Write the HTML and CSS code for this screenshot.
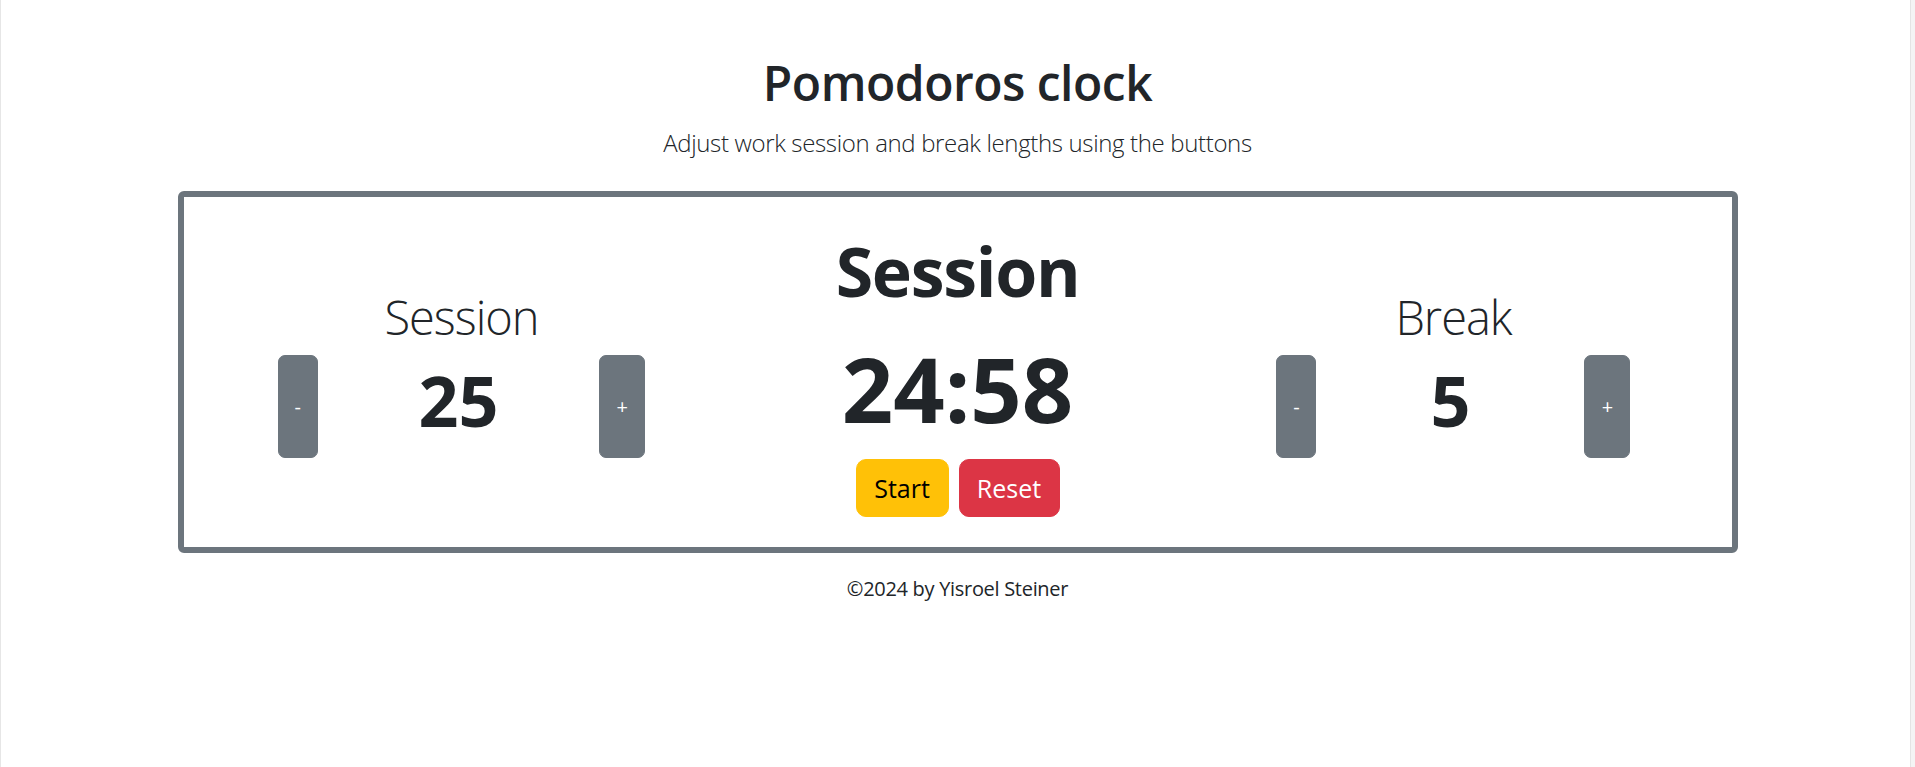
FILE: index.html
```html
<!DOCTYPE html>
<html lang="en">
<head>
<meta charset="utf-8">
<title>Pomodoros clock</title>
<link rel="stylesheet" href="styles.css">
</head>
<body>
<main class="app">
  <header class="intro">
    <h1 class="title">Pomodoros clock</h1>
    <p class="lead">Adjust work session and break lengths using the buttons</p>
  </header>
  <section class="clock">
    <div class="length">
      <h2 class="length-label">Session</h2>
      <div class="length-row">
        <button class="btn btn-step btn-dec">-</button>
        <span class="length-value">25</span>
        <button class="btn btn-step btn-inc">+</button>
      </div>
    </div>
    <div class="timer">
      <h2 class="timer-label">Session</h2>
      <div class="timer-time">24:58</div>
      <div class="controls">
        <button class="btn btn-start">Start</button>
        <button class="btn btn-reset">Reset</button>
      </div>
    </div>
    <div class="length">
      <h2 class="length-label">Break</h2>
      <div class="length-row">
        <button class="btn btn-step btn-dec">-</button>
        <span class="length-value">5</span>
        <button class="btn btn-step btn-inc">+</button>
      </div>
    </div>
  </section>
  <footer class="credit">©2024 by Yisroel Steiner</footer>
</main>
</body>
</html>
```
FILE: styles.css
```css
html, body {
  margin: 0;
  padding: 0;
}

body {
  min-height: 100vh;
  font-family: "Open Sans", "Noto Sans", sans-serif;
  color: #212529;
  background: #fff;
  box-shadow: inset 1px 0 0 #e6e6e6, inset -4px 0 0 #f4f4f4, inset -5px 0 0 #e4e4e4;
}

.app {
  display: flex;
  flex-direction: column;
  align-items: center;
  padding-top: 53px;
}

.intro {
  display: flex;
  flex-direction: column;
  align-items: center;
}

.title {
  margin: 0;
  font-size: 48px;
  font-weight: 600;
  line-height: 60px;
  letter-spacing: -0.5px;
}

.lead {
  margin: 11px 0 0;
  font-size: 24px;
  font-weight: 300;
  line-height: 37px;
  letter-spacing: -0.35px;
}

.clock {
  box-sizing: border-box;
  width: 1560px;
  height: 362px;
  margin-top: 30px;
  padding: 0 44px;
  border: 6px solid #6c757d;
  border-radius: 6px;
  display: grid;
  grid-template-columns: 468px 1fr 468px;
  align-items: center;
}

.length {
  display: flex;
  flex-direction: column;
}

.length-label {
  margin: 0;
  text-align: center;
  font-size: 47px;
  font-weight: 300;
  line-height: 60px;
  letter-spacing: -1px;
}

.length-row {
  display: flex;
  justify-content: space-around;
  height: 103px;
  margin-top: 8px;
}

.btn {
  font-family: inherit;
  cursor: pointer;
  box-sizing: border-box;
  border: 1px solid transparent;
  padding: 0;
  display: flex;
  align-items: center;
  justify-content: center;
}

.btn-step {
  background: #6c757d;
  border-color: #6c757d;
  color: #fff;
  font-size: 20px;
  border-radius: 7px;
}

.btn-dec {
  width: 40px;
}

.btn-inc {
  width: 46px;
}

.length-value {
  font-size: 70px;
  font-weight: 700;
  line-height: 84px;
  padding-top: 3px;
}

.timer {
  display: flex;
  flex-direction: column;
  align-items: center;
}

.timer-label {
  margin: 0;
  font-size: 68px;
  font-weight: 700;
  line-height: 86px;
  letter-spacing: -1.3px;
}

.timer-time {
  margin-top: 20px;
  font-size: 90px;
  font-weight: 700;
  line-height: 108px;
}

.controls {
  display: flex;
  gap: 10px;
  margin-top: 17px;
}

.btn-start,
.btn-reset {
  height: 58px;
  font-size: 25px;
  border-radius: 10px;
}

.btn-start {
  width: 93px;
  background: #ffc107;
  border-color: #ffc107;
  color: #000;
}

.btn-reset {
  width: 101px;
  background: #dc3545;
  border-color: #dc3545;
  color: #fff;
}

.credit {
  margin-top: 21px;
  font-size: 20px;
  line-height: 30px;
  letter-spacing: -0.3px;
}
```
